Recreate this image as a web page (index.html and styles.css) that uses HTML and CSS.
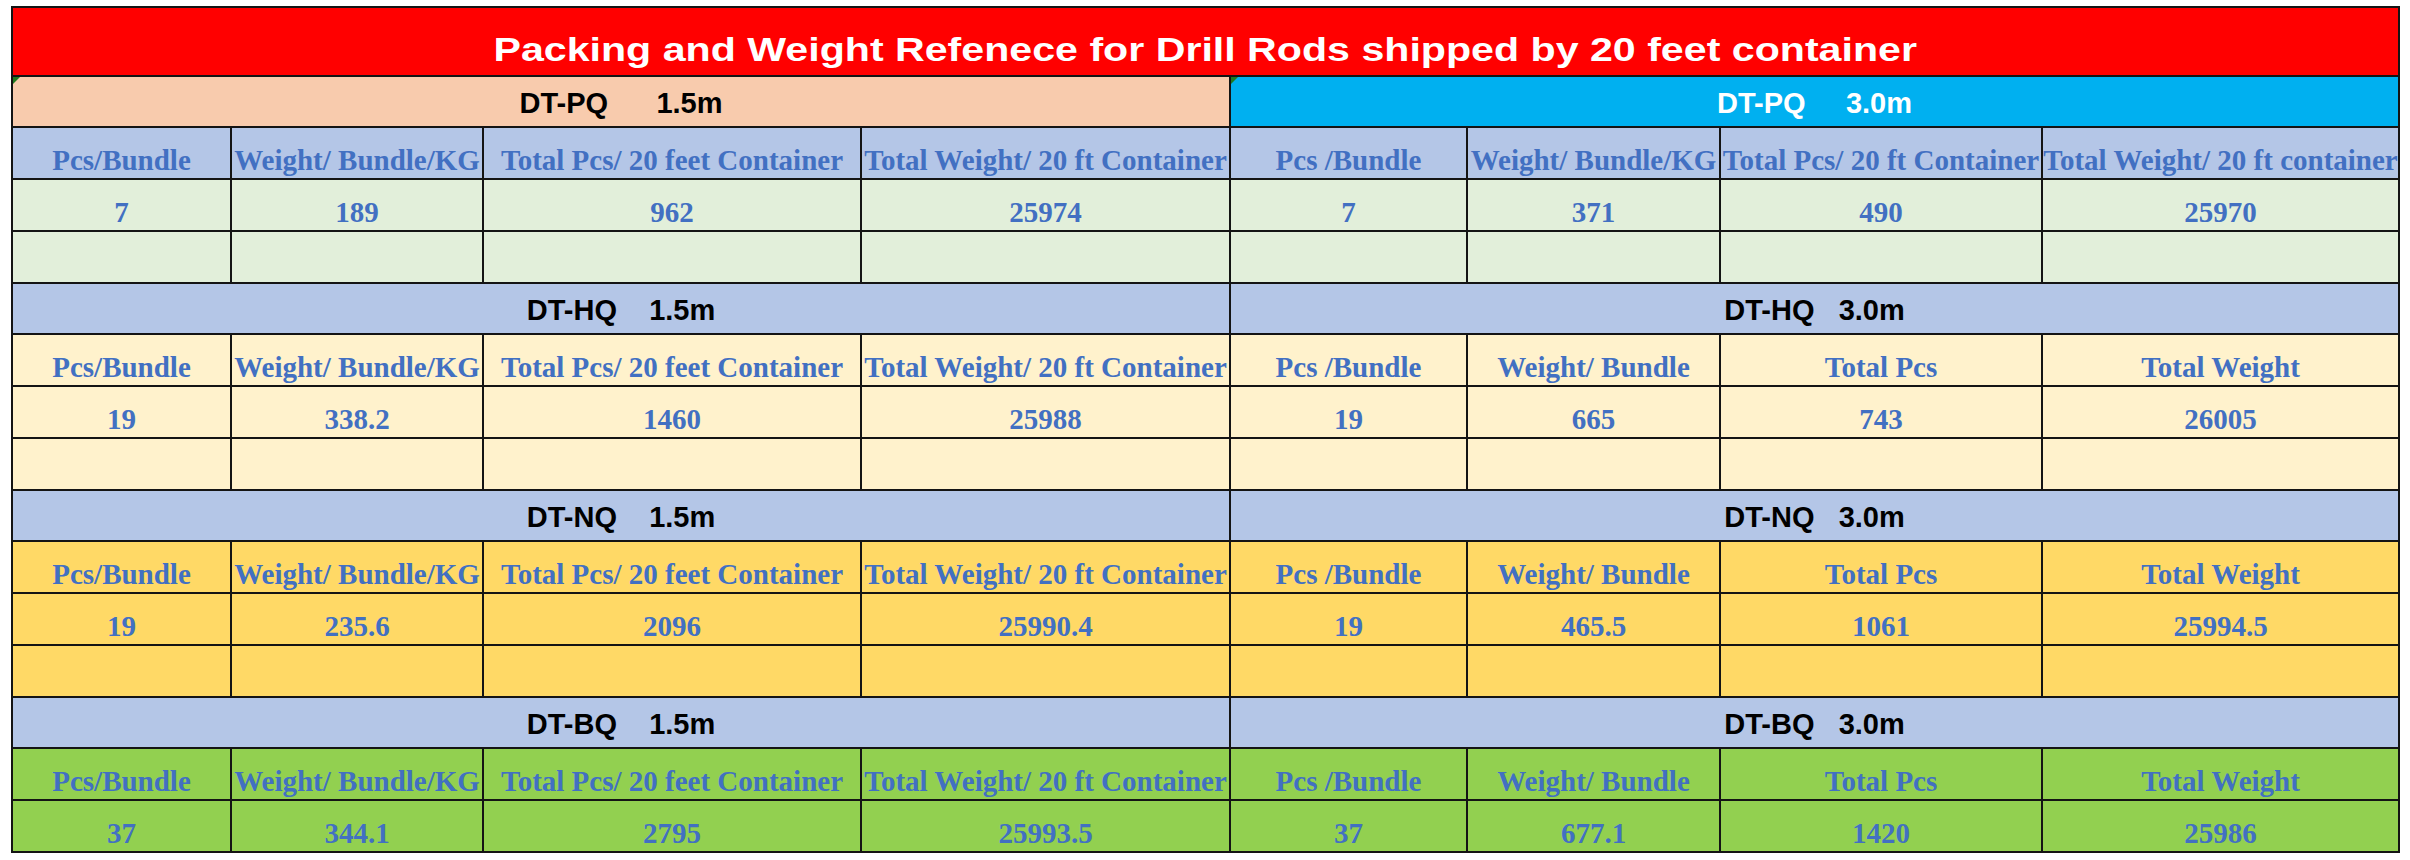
FILE: index.html
```html
<!DOCTYPE html>
<html>
<head>
<meta charset="utf-8">
<link rel="stylesheet" href="styles.css">
</head>
<body>
<table class="sheet">
  <colgroup>
    <col class="w1"><col class="w2"><col class="w3"><col class="w4">
    <col class="w5"><col class="w6"><col class="w7"><col class="w8">
  </colgroup>
  <tr class="title"><td colspan="8"><span class="title-text">Packing and Weight Refenece for Drill Rods shipped by 20 feet container</span></td></tr>

  <tr class="sec"><td colspan="4" class="peach mark">DT-PQ      1.5m</td><td colspan="4" class="cyan mark">DT-PQ     3.0m</td></tr>
  <tr class="hdr steel"><td>Pcs/Bundle</td><td>Weight/ Bundle/KG</td><td>Total Pcs/ 20 feet Container</td><td>Total Weight/ 20 ft Container</td><td>Pcs /Bundle</td><td>Weight/ Bundle/KG</td><td>Total Pcs/ 20 ft Container</td><td>Total Weight/ 20 ft container</td></tr>
  <tr class="num mint"><td>7</td><td>189</td><td>962</td><td>25974</td><td>7</td><td>371</td><td>490</td><td>25970</td></tr>
  <tr class="num mint"><td></td><td></td><td></td><td></td><td></td><td></td><td></td><td></td></tr>

  <tr class="sec steel"><td colspan="4">DT-HQ    1.5m</td><td colspan="4">DT-HQ   3.0m</td></tr>
  <tr class="hdr cream"><td>Pcs/Bundle</td><td>Weight/ Bundle/KG</td><td>Total Pcs/ 20 feet Container</td><td>Total Weight/ 20 ft Container</td><td>Pcs /Bundle</td><td>Weight/ Bundle</td><td>Total Pcs</td><td>Total Weight</td></tr>
  <tr class="num cream"><td>19</td><td>338.2</td><td>1460</td><td>25988</td><td>19</td><td>665</td><td>743</td><td>26005</td></tr>
  <tr class="num cream"><td></td><td></td><td></td><td></td><td></td><td></td><td></td><td></td></tr>

  <tr class="sec steel"><td colspan="4">DT-NQ    1.5m</td><td colspan="4">DT-NQ   3.0m</td></tr>
  <tr class="hdr gold"><td>Pcs/Bundle</td><td>Weight/ Bundle/KG</td><td>Total Pcs/ 20 feet Container</td><td>Total Weight/ 20 ft Container</td><td>Pcs /Bundle</td><td>Weight/ Bundle</td><td>Total Pcs</td><td>Total Weight</td></tr>
  <tr class="num gold"><td>19</td><td>235.6</td><td>2096</td><td>25990.4</td><td>19</td><td>465.5</td><td>1061</td><td>25994.5</td></tr>
  <tr class="num gold"><td></td><td></td><td></td><td></td><td></td><td></td><td></td><td></td></tr>

  <tr class="sec steel"><td colspan="4">DT-BQ    1.5m</td><td colspan="4">DT-BQ   3.0m</td></tr>
  <tr class="hdr lime"><td>Pcs/Bundle</td><td>Weight/ Bundle/KG</td><td>Total Pcs/ 20 feet Container</td><td>Total Weight/ 20 ft Container</td><td>Pcs /Bundle</td><td>Weight/ Bundle</td><td>Total Pcs</td><td>Total Weight</td></tr>
  <tr class="num lime"><td>37</td><td>344.1</td><td>2795</td><td>25993.5</td><td>37</td><td>677.1</td><td>1420</td><td>25986</td></tr>
</table>
</body>
</html>
```

FILE: styles.css
```css
html, body {
  margin: 0;
  padding: 0;
  background: #ffffff;
}

body {
  padding: 6px 0 0 11px;
}

.sheet {
  border-collapse: collapse;
  table-layout: fixed;
  width: 2388px;
}

.w1 { width: 219px; }
.w2 { width: 252px; }
.w3 { width: 378px; }
.w4 { width: 369px; }
.w5 { width: 237px; }
.w6 { width: 253px; }
.w7 { width: 322px; }
.w8 { width: 357px; }

.sheet td {
  border: 2px solid #141414;
  padding: 0;
  text-align: center;
  vertical-align: bottom;
  white-space: pre;
  overflow: visible;
}

.title td {
  background: #ff0000;
  color: #ffffff;
  font-family: "Liberation Sans", Arial, sans-serif;
  font-weight: bold;
  font-size: 34px;
  line-height: 1;
  height: 58px;
  padding-bottom: 9px;
}

.title-text {
  display: inline-block;
  transform: scaleX(1.21);
}

.sec td {
  font-family: "Liberation Sans", Arial, sans-serif;
  font-weight: bold;
  font-size: 29px;
  line-height: 1;
  color: #000000;
  height: 41px;
  padding-bottom: 8px;
}

.sec td.cyan {
  color: #ffffff;
}

.hdr td,
.num td {
  font-family: "Liberation Serif", "Times New Roman", serif;
  font-weight: bold;
  font-size: 29px;
  line-height: 1;
  color: #4270c2;
  height: 47px;
  padding-bottom: 3px;
}

.mark {
  position: relative;
}

.mark::before {
  content: "";
  position: absolute;
  left: 0;
  top: 0;
  border-style: solid;
  border-width: 7px 7px 0 0;
  border-color: #1f7a1f transparent transparent transparent;
}

.peach { background: #f8cbad; }
.cyan { background: #00b0f0; }
.steel td, td.steel { background: #b4c6e7; }
.mint td { background: #e2efda; }
.cream td { background: #fff2cc; }
.gold td { background: #ffd966; }
.lime td { background: #92d050; }
```
